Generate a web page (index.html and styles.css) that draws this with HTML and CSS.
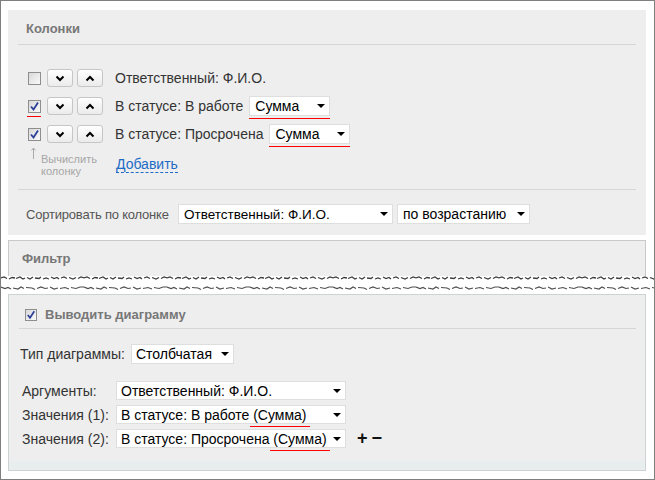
FILE: index.html
```html
<!DOCTYPE html>
<html>
<head>
<meta charset="utf-8">
<link rel="stylesheet" href="styles.css">
</head>
<body>
<div class="frame">
  <section class="panel panel-cols">
    <div class="panel-head">Колонки</div>
    <div class="sep"></div>
    <div class="rows">
      <div class="row">
        <span class="cb"></span>
        <span class="btn"><svg width="10" height="7" viewBox="0 0 10 7"><path d="M1.5 1.5 L5 5 L8.5 1.5" fill="none" stroke="#000" stroke-width="2"/></svg></span>
        <span class="btn"><svg width="10" height="7" viewBox="0 0 10 7"><path d="M1.5 5.5 L5 2 L8.5 5.5" fill="none" stroke="#000" stroke-width="2"/></svg></span>
        <span class="label">Ответственный: Ф.И.О.</span>
      </div>
      <div class="row">
        <span class="cb mark-cb"><svg width="11" height="11" viewBox="0 0 11 11"><path d="M2 5.5 L4.5 8.5 L9 1.5" fill="none" stroke="#2b3f98" stroke-width="1.8"/></svg></span>
        <span class="btn"><svg width="10" height="7" viewBox="0 0 10 7"><path d="M1.5 1.5 L5 5 L8.5 1.5" fill="none" stroke="#000" stroke-width="2"/></svg></span>
        <span class="btn"><svg width="10" height="7" viewBox="0 0 10 7"><path d="M1.5 5.5 L5 2 L8.5 5.5" fill="none" stroke="#000" stroke-width="2"/></svg></span>
        <span class="label">В статусе: В работе</span>
        <span class="ul"><span class="sel sel-sum"><span>Сумма</span><i class="caret"></i></span></span>
      </div>
      <div class="row">
        <span class="cb"><svg width="11" height="11" viewBox="0 0 11 11"><path d="M2 5.5 L4.5 8.5 L9 1.5" fill="none" stroke="#2b3f98" stroke-width="1.8"/></svg></span>
        <span class="btn"><svg width="10" height="7" viewBox="0 0 10 7"><path d="M1.5 1.5 L5 5 L8.5 1.5" fill="none" stroke="#000" stroke-width="2"/></svg></span>
        <span class="btn"><svg width="10" height="7" viewBox="0 0 10 7"><path d="M1.5 5.5 L5 2 L8.5 5.5" fill="none" stroke="#000" stroke-width="2"/></svg></span>
        <span class="label">В статусе: Просрочена</span>
        <span class="ul"><span class="sel sel-sum"><span>Сумма</span><i class="caret"></i></span></span>
      </div>
    </div>
    <div class="add-row">
      <div class="hint">
        <svg class="hint-arrow" width="7" height="13" viewBox="0 0 7 13"><path d="M3.5 1 L3.5 12 M1.5 3.5 L3.5 1 L5.5 3.5" fill="none" stroke="#aaa" stroke-width="1"/></svg>
        <span class="hint-text">Вычислить<br>колонку</span>
      </div>
      <a class="add">Добавить</a>
    </div>
    <div class="sep sep-2"></div>
    <div class="sort-row">
      <span class="sort-label">Сортировать по колонке</span>
      <span class="sel sel-col"><span>Ответственный: Ф.И.О.</span><i class="caret"></i></span>
      <span class="sel sel-dir"><span>по возрастанию</span><i class="caret"></i></span>
    </div>
  </section>

  <section class="panel panel-filter">
    <div class="filter-head">Фильтр</div>
  </section>

  <div class="torn">
    <svg width="655" height="18" viewBox="0 0 655 18">
      <defs>
        <pattern id="tearA" width="83" height="18" patternUnits="userSpaceOnUse">
          <path d="M0 2 L3 1 L6 2.5 M8 3 L11 1.5 L14 2 M15 2.5 L19 1 L22 3 L24 2 M26 1.5 L29 3 L32 1 M34 2 L38 2.5 L40 1 M42 3 L45 2 L48 3 M50 1 L53 2.5 L56 1.5 L58 3 M60 2 L63 1 L66 2.5 M68 1.5 L72 3 L75 1.5 M77 2.5 L80 1 L83 2" fill="none" stroke="#3c3c3c" stroke-width="1.3"/>
          <path d="M0 11 L4 12.5 L7 11.5 L10 13 M12 12 L17 13 L20 11 L23 12.5 M25 11.5 L31 12 L34 13.5 M36 12.5 L40 11 L44 12.5 L47 12 M49 11 L53 13 L57 12 M59 12.5 L64 11.5 L68 13 M70 11.5 L75 12.5 L79 11 L83 11" fill="none" stroke="#4e4e4e" stroke-width="1.2"/>
        </pattern>
      </defs>
      <rect x="0" y="0" width="655" height="18" fill="url(#tearA)"/>
    </svg>
  </div>

  <section class="panel panel-chart">
    <div class="chart-head">
      <span class="cb cb-small"><svg width="10" height="10" viewBox="0 0 10 10"><path d="M1.8 5 L4 7.8 L8.3 1.3" fill="none" stroke="#2b3f98" stroke-width="1.7"/></svg></span>
      <span class="chart-title">Выводить диаграмму</span>
    </div>
    <div class="sep sep-chart"></div>
    <div class="type-row">
      <span class="type-label">Тип диаграммы:</span>
      <span class="sel sel-type"><span>Столбчатая</span><i class="caret"></i></span>
    </div>
    <div class="args">
      <div class="arg-row">
        <span class="arg-label">Аргументы:</span>
        <span class="sel sel-arg"><span>Ответственный: Ф.И.О.</span><i class="caret"></i></span>
      </div>
      <div class="arg-row">
        <span class="arg-label">Значения (1):</span>
        <span class="sel sel-arg"><span>В статусе: В работе <span class="mark-txt">(Сумма)</span></span><i class="caret"></i></span>
      </div>
      <div class="arg-row">
        <span class="arg-label">Значения (2):</span>
        <span class="sel sel-arg"><span>В статусе: Просрочена <span class="mark-txt">(Сумма)</span></span><i class="caret"></i></span>
        <span class="pm"><span>+</span><span>−</span></span>
      </div>
    </div>
  </section>
</div>
</body>
</html>
```

FILE: styles.css
```css
body {
  margin: 0;
  font-family: "Liberation Sans", Arial, sans-serif;
}

.frame {
  width: 655px;
  height: 480px;
  box-sizing: border-box;
  border: 1px solid #7f7f7f;
  background: #fff;
  padding: 9px 8px 0 7px;
  overflow: hidden;
}

.panel {
  background: #eeeeee;
}

.panel-cols {
  height: 225px;
  box-sizing: border-box;
}

.panel-head {
  font-weight: bold;
  color: #777;
  font-size: 13px;
  line-height: 16px;
  padding: 11px 0 7px 18px;
}

.sep {
  height: 1px;
  background: #d6d6d6;
  margin: 0 10px;
}

.rows {
  padding: 19px 0 0 20px;
}

.row {
  display: flex;
  align-items: center;
  height: 28px;
}

.cb {
  width: 13px;
  height: 13px;
  box-sizing: border-box;
  border: 1px solid #8e8e8e;
  background: linear-gradient(135deg, #d8d8d8, #fafafa);
  display: flex;
  align-items: center;
  justify-content: center;
  position: relative;
  flex: none;
}

.cb-small {
  width: 12px;
  height: 12px;
}

.mark-cb::after {
  content: "";
  position: absolute;
  left: -2px;
  right: -1px;
  top: 15px;
  height: 1px;
  background-color: #ff0000;
}

.btn {
  width: 26px;
  height: 18px;
  box-sizing: border-box;
  border: 1px solid #c6c6c6;
  border-radius: 3px;
  background: linear-gradient(#ffffff, #ebebeb);
  display: flex;
  align-items: center;
  justify-content: center;
  margin-left: 4px;
  flex: none;
}

.cb + .btn {
  margin-left: 6px;
}

.label {
  font-size: 14px;
  color: #333;
  margin-left: 12px;
  margin-right: 6px;
}

.ul {
  display: flex;
  align-self: flex-start;
  margin-top: 4px;
  padding-bottom: 2px;
  border-bottom: 1px solid #ff0000;
}

.sel {
  display: inline-flex;
  align-items: center;
  justify-content: space-between;
  height: 20px;
  box-sizing: border-box;
  background: #fff;
  border: 1px solid #dedede;
  padding: 0 4px 0 4px;
  font-size: 14px;
  color: #000;
  position: relative;
  flex: none;
}

.caret {
  width: 0;
  height: 0;
  border-left: 4px solid transparent;
  border-right: 4px solid transparent;
  border-top: 4px solid #000;
}

.sel-sum {
  width: 81px;
  padding-left: 5px;
}

.add-row {
  display: flex;
  align-items: center;
  height: 24px;
  padding: 5px 0 0 20px;
}

.hint {
  width: 88px;
  display: flex;
  align-items: flex-start;
}

.hint-arrow {
  margin: -6px 0 0 2px;
  flex: none;
}

.hint-text {
  font-size: 11px;
  line-height: 12px;
  color: #a6a6a6;
  margin-left: 4px;
}

.add {
  color: #1c6bc6;
  font-size: 14px;
  line-height: 15px;
  text-decoration: none;
  border-bottom: 1px dashed #1c6bc6;
}

.sep-2 {
  margin-top: 12px;
}

.sort-row {
  display: flex;
  align-items: center;
  height: 20px;
  padding: 14px 0 0 18px;
}

.sort-label {
  font-size: 13px;
  letter-spacing: -0.2px;
  color: #555;
  width: 152px;
  flex: none;
}

.sel-col {
  width: 215px;
  padding-left: 5px;
  font-size: 13.5px;
}

.sel-dir {
  width: 133px;
  margin-left: 4px;
  padding-left: 5px;
}

.panel-filter {
  margin-top: 5px;
  height: 36px;
  box-sizing: border-box;
  border: 1px solid #c9c9c9;
  border-bottom: none;
}

.filter-head {
  font-weight: bold;
  color: #777;
  font-size: 13px;
  line-height: 16px;
  padding: 10px 0 0 13px;
}

.torn {
  height: 18px;
  margin: 0 -8px 0 -7px;
  background: #fff;
}

.torn svg {
  display: block;
}

.panel-chart {
  height: 177px;
  box-sizing: border-box;
  border: 1px solid #cdd2d2;
  background: linear-gradient(to bottom, #eeeeee 0, #eeeeee 165px, #e8eeee 167px, #e8eeee 100%);
}

.chart-head {
  display: flex;
  align-items: center;
  height: 27px;
  padding: 6px 0 0 16px;
}

.chart-title {
  font-weight: bold;
  color: #777;
  font-size: 13px;
  margin-left: 8px;
}

.sep-chart {
  margin: 0 9px 0 10px;
}

.type-row {
  display: flex;
  align-items: center;
  height: 20px;
  padding: 15px 0 0 11px;
}

.type-label {
  font-size: 14px;
  color: #333;
  width: 111px;
}

.sel-type {
  width: 103px;
}

.args {
  margin-top: 17px;
  padding-left: 13px;
  display: flex;
  flex-direction: column;
  gap: 5px;
}

.arg-row {
  display: flex;
  align-items: center;
  height: 19px;
}

.arg-label {
  font-size: 14px;
  color: #333;
  width: 94px;
}

.sel-arg {
  width: 230px;
  height: 19px;
}

.mark-txt {
  position: relative;
}

.mark-txt::after {
  content: "";
  position: absolute;
  left: -3px;
  right: -3px;
  top: calc(100% + 3px);
  height: 1px;
  background-color: #ff0000;
}

.pm {
  display: flex;
  gap: 4px;
  margin-left: 11px;
  font-weight: bold;
  font-size: 18px;
  color: #111;
}
```
